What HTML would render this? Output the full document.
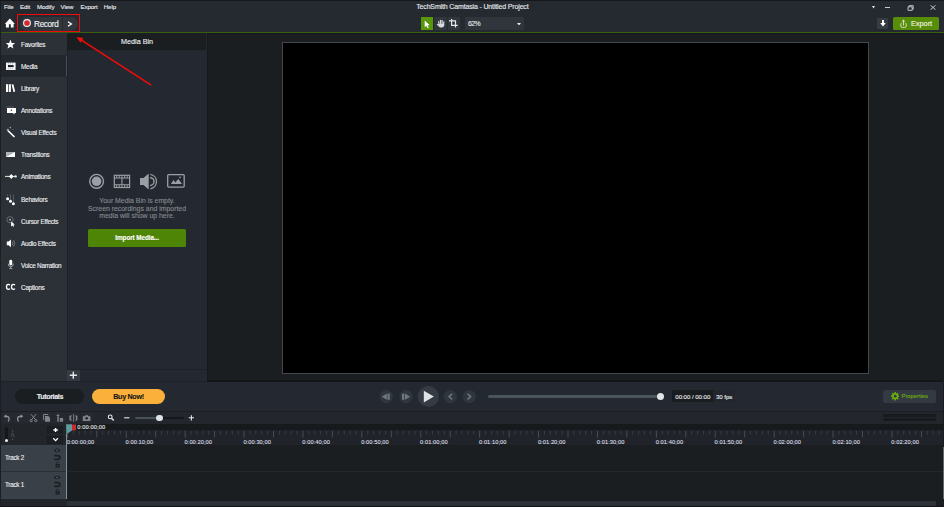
<!DOCTYPE html>
<html><head><meta charset="utf-8">
<style>
*{margin:0;padding:0;box-sizing:border-box}
html,body{width:944px;height:507px;overflow:hidden;background:#1b1e21;font-family:"Liberation Sans",sans-serif;color:#e6e8ea}
.a{position:absolute}
.t{position:absolute;white-space:nowrap;line-height:1;-webkit-text-stroke:0.12px currentColor}
</style></head><body>
<div class="a" style="left:0px;top:0px;width:944px;height:32px;background:#252930;"></div>
<div class="a" style="left:0px;top:0px;width:944px;height:1px;background:#15171a;"></div>
<div class="a" style="left:0px;top:32px;width:944px;height:1.2px;background:#395e13;"></div>
<div class="t" style="left:4px;top:3.78px;font-size:6.1px;color:#eceef1;font-weight:400;letter-spacing:-0.1px">File</div>
<div class="t" style="left:20px;top:3.78px;font-size:6.1px;color:#eceef1;font-weight:400;letter-spacing:-0.1px">Edit</div>
<div class="t" style="left:37px;top:3.78px;font-size:6.1px;color:#eceef1;font-weight:400;letter-spacing:-0.1px">Modify</div>
<div class="t" style="left:60.6px;top:3.78px;font-size:6.1px;color:#eceef1;font-weight:400;letter-spacing:-0.1px">View</div>
<div class="t" style="left:80.5px;top:3.78px;font-size:6.1px;color:#eceef1;font-weight:400;letter-spacing:-0.1px">Export</div>
<div class="t" style="left:103.8px;top:3.78px;font-size:6.1px;color:#eceef1;font-weight:400;letter-spacing:-0.1px">Help</div>
<div class="t" style="left:416.2px;top:3.08px;font-size:7px;color:#e8ebee;font-weight:400;letter-spacing:-0.15px">TechSmith Camtasia - Untitled Project</div>
<svg class="a" style="left:4px;top:18px" width="12" height="11" viewBox="0 0 12 11"><path d="M5.87 0.5 L10.9 6 L9.6 6 L9.6 9.6 L6.8 9.6 L6.8 6.2 L4.9 6.2 L4.9 9.6 L1.9 9.6 L1.9 6 L0.85 6 Z" fill="#fff"/></svg>
<div class="a" style="left:19.5px;top:16.5px;width:58px;height:14px;background:#30363c;border-radius:7px"></div>
<div class="a" style="left:62px;top:16.5px;width:1px;height:14px;background:#262b30;"></div>
<svg class="a" style="left:21.7px;top:18.4px" width="10" height="10" viewBox="0 0 10 10"><circle cx="5" cy="5" r="3.95" fill="#f4f4f4"/><circle cx="5" cy="5" r="2.85" fill="#d62a31"/></svg>
<div class="t" style="left:34.1px;top:20.54px;font-size:8.2px;color:#f2f4f6;font-weight:400;letter-spacing:-0.35px">Record</div>
<svg class="a" style="left:67.3px;top:21px" width="6" height="6" viewBox="0 0 6 6"><path d="M1 0.8 L4.4 3 L1 5.2" stroke="#fff" stroke-width="1.3" fill="none"/></svg>
<div class="a" style="left:16.6px;top:13.7px;width:63.2px;height:18.8px;border:1.8px solid #f50a0a"></div>
<div class="a" style="left:420.8px;top:17px;width:12.7px;height:12.8px;background:#58960a;"></div>
<svg class="a" style="left:424px;top:19.5px" width="7" height="9" viewBox="0 0 7 9"><path d="M0.7 0.4 L0.7 7.3 L2.4 5.7 L3.7 8.3 L4.8 7.8 L3.6 5.2 L5.8 5.2 Z" fill="#fff"/></svg>
<div class="a" style="left:434.2px;top:17px;width:12.6px;height:12.8px;background:#30363c;"></div>
<svg class="a" style="left:435.5px;top:19px" width="10" height="10" viewBox="0 0 10 10"><g fill="#d8dade"><rect x="2.3" y="1.9" width="1.2" height="4.5" rx="0.6" transform="rotate(-12 2.9 4)"/><rect x="3.9" y="0.7" width="1.2" height="5" rx="0.6"/><rect x="5.5" y="1" width="1.2" height="5" rx="0.6"/><rect x="7" y="2.2" width="1.2" height="4.4" rx="0.6" transform="rotate(10 7.6 4.4)"/><path d="M2.4 5 H8.3 V6.2 Q8.2 8.6 5.6 8.6 Q3.8 8.6 2.8 7.4 L0.6 5.3 Q0.9 4.6 1.7 5 L2.4 5.6 Z"/></g></svg>
<div class="a" style="left:447.5px;top:17px;width:12.6px;height:12.8px;background:#30363c;"></div>
<svg class="a" style="left:449px;top:19.3px" width="10" height="10" viewBox="0 0 10 10"><path d="M2.6 0 V6.3 H8.7 M0 1.9 H6.5 V8.6" stroke="#e4e6e9" stroke-width="1.2" fill="none"/></svg>
<div class="a" style="left:465px;top:17px;width:59px;height:13px;background:#2f353b;border-radius:1px"></div>
<div class="t" style="left:467.9px;top:21.29px;font-size:6.9px;color:#e4e7ea;font-weight:400;letter-spacing:-0.55px">62%</div>
<svg class="a" style="left:517px;top:22.5px" width="4" height="2.5" viewBox="0 0 4 2.5"><path d="M0 0 L4 0 L2 2.5 Z" fill="#e6e8eb"/></svg>
<svg class="a" style="left:871.5px;top:6.2px" width="3" height="2.5" viewBox="0 0 3 2.5"><path d="M0 0 L3 0 L1.5 2.4 Z" fill="#e8eaed"/></svg>
<div class="a" style="left:885px;top:6.5px;width:5.3px;height:1px;background:#c8ccd0;"></div>
<svg class="a" style="left:906.5px;top:4.5px" width="7" height="6" viewBox="0 0 7 6"><path d="M1 1.8 L5.2 1.8 L5.2 5.3 L1 5.3 Z M2 1.8 L2 0.7 L6.2 0.7 L6.2 4.2 L5.2 4.2" stroke="#cfd3d7" stroke-width="0.9" fill="none"/></svg>
<svg class="a" style="left:929.6px;top:4.8px" width="6" height="5" viewBox="0 0 6 5"><path d="M0.4 0.2 L5.6 4.8 M5.6 0.2 L0.4 4.8" stroke="#d6d9dd" stroke-width="0.9"/></svg>
<div class="a" style="left:877px;top:17.6px;width:11.3px;height:11.6px;background:#363c43;border-radius:1px"></div>
<svg class="a" style="left:879.5px;top:20px" width="6" height="7" viewBox="0 0 6 7"><path d="M2 0 L4 0 L4 3 L5.8 3 L3 6.5 L0.2 3 L2 3 Z" fill="#fff"/></svg>
<div class="a" style="left:893px;top:17px;width:46.3px;height:13px;background:#578d08;border-radius:1.5px"></div>
<svg class="a" style="left:899.5px;top:18.5px" width="8" height="10" viewBox="0 0 8 10"><path d="M1.8 4.3 H1.3 Q0.8 4.3 0.8 5 V7 Q0.8 8.4 2.3 8.4 H4.7 Q6.2 8.4 6.2 7 V5 Q6.2 4.3 5.7 4.3 H5.2" stroke="#dce8c6" stroke-width="0.9" fill="none"/><path d="M3.5 6.6 V1.6" stroke="#dce8c6" stroke-width="0.9"/><path d="M3.5 0.5 L5.2 2.4 H1.8 Z" fill="#dce8c6"/></svg>
<div class="t" style="left:911px;top:20.04px;font-size:7.3px;color:#f4f8ec;font-weight:400;">Export</div>
<div class="a" style="left:0px;top:33px;width:67px;height:348px;background:#2c3138;"></div>
<div class="a" style="left:0px;top:1px;width:1.1px;height:506px;background:#1b1e22;"></div>
<div class="a" style="left:1px;top:55.4px;width:65px;height:21.5px;background:#22262d;"></div>
<div class="t" style="left:21px;top:41.75px;font-size:6.4px;color:#eef0f2;font-weight:400;letter-spacing:-0.22px">Favorites</div>
<div class="t" style="left:21px;top:63.87px;font-size:6.4px;color:#eef0f2;font-weight:400;letter-spacing:-0.22px">Media</div>
<div class="t" style="left:21px;top:85.99px;font-size:6.4px;color:#eef0f2;font-weight:400;letter-spacing:-0.22px">Library</div>
<div class="t" style="left:21px;top:108.11px;font-size:6.4px;color:#eef0f2;font-weight:400;letter-spacing:-0.22px">Annotations</div>
<div class="t" style="left:21px;top:130.23px;font-size:6.4px;color:#eef0f2;font-weight:400;letter-spacing:-0.22px">Visual Effects</div>
<div class="t" style="left:21px;top:152.35px;font-size:6.4px;color:#eef0f2;font-weight:400;letter-spacing:-0.22px">Transitions</div>
<div class="t" style="left:21px;top:174.47px;font-size:6.4px;color:#eef0f2;font-weight:400;letter-spacing:-0.22px">Animations</div>
<div class="t" style="left:21px;top:196.59px;font-size:6.4px;color:#eef0f2;font-weight:400;letter-spacing:-0.22px">Behaviors</div>
<div class="t" style="left:21px;top:218.71px;font-size:6.4px;color:#eef0f2;font-weight:400;letter-spacing:-0.22px">Cursor Effects</div>
<div class="t" style="left:21px;top:240.83px;font-size:6.4px;color:#eef0f2;font-weight:400;letter-spacing:-0.22px">Audio Effects</div>
<div class="t" style="left:21px;top:262.95px;font-size:6.4px;color:#eef0f2;font-weight:400;letter-spacing:-0.22px">Voice Narration</div>
<div class="t" style="left:21px;top:285.07px;font-size:6.4px;color:#eef0f2;font-weight:400;letter-spacing:-0.22px">Captions</div>
<svg class="a" style="left:0;top:0" width="67" height="300" viewBox="0 0 67 300">
<path d="M10.45 39.6 L11.75 43 L15.1 43.1 L12.5 45.3 L13.4 48.6 L10.45 46.7 L7.5 48.6 L8.4 45.3 L5.8 43.1 L9.15 43 Z" fill="#fff"/>
<rect x="6" y="62.6" width="9.6" height="7.4" fill="#f4f5f6"/><rect x="8" y="65.1" width="5.6" height="2" fill="#15181b"/>
<g fill="#9da2a7"><rect x="7.9" y="63.4" width="1" height="0.9"/><rect x="9.9" y="63.4" width="1" height="0.9"/><rect x="11.9" y="63.4" width="1" height="0.9"/><rect x="7.9" y="68.3" width="1" height="0.9"/><rect x="9.9" y="68.3" width="1" height="0.9"/><rect x="11.9" y="68.3" width="1" height="0.9"/></g>
<g fill="#fff"><rect x="6" y="84.2" width="2.1" height="7.8"/><rect x="8.8" y="84.2" width="2.1" height="7.8"/><path d="M11.6 84.6 L13.4 84.2 L15.2 91.6 L13.4 92 Z"/></g>
<path d="M6 107 H14" stroke="#6f757b" stroke-width="0.6"/>
<path d="M7 107.9 H16 V112.9 H14.3 L14.8 114.4 L12.4 112.9 H7 Z" fill="#fff"/><circle cx="11.4" cy="110.3" r="0.8" fill="#40454b"/>
<path d="M8.3 131 L14 136.5" stroke="#fff" stroke-width="1.7" stroke-linecap="round"/><circle cx="7.8" cy="129.8" r="1.1" fill="#9ea3a8"/><circle cx="10.3" cy="127.6" r="0.8" fill="#9ea3a8"/><path d="M12.3 129.5 H13.8" stroke="#7d8287" stroke-width="0.6"/>
<rect x="6.2" y="152" width="8.8" height="5" fill="#fff"/><path d="M6.2 152 H15 L6.2 157 Z" fill="#aab0b5"/>
<path d="M5 176.4 H16" stroke="#fff" stroke-width="0.9"/><path d="M11.3 173.9 L13.6 176.4 L11.3 178.9 L9 176.4 Z" fill="#fff"/><circle cx="15.6" cy="176.4" r="1.2" fill="#e8e9ea"/>
<path d="M10.5 194.5 V200 M13.4 194.5 V202.6" stroke="#5f656b" stroke-width="0.8"/><circle cx="7.6" cy="195.2" r="0.6" fill="#6a7076"/>
<circle cx="7.6" cy="198.7" r="1.5" fill="#fff"/><circle cx="10.5" cy="201.2" r="1.5" fill="#fff"/><circle cx="13.4" cy="203.7" r="1.5" fill="#fff"/>
<circle cx="10.1" cy="219.7" r="3.1" stroke="#737980" stroke-width="0.8" fill="none"/><rect x="9.3" y="218.9" width="1.6" height="1.6" fill="#b9bdc1"/>
<path d="M11.1 221.6 L11.1 226.4 L12.3 225.4 L13.3 226.8 L14.2 226.2 L13.3 224.8 L14.8 224.6 Z" fill="#fff"/>
<path d="M6.8 241.4 H8.6 L11 239.5 V247.2 L8.6 245.3 H6.8 Z" fill="#fff"/><path d="M12.2 241.6 Q13.3 243.35 12.2 245.1 M13.6 240.2 Q15.8 243.35 13.6 246.5" stroke="#8f959b" stroke-width="0.7" fill="none"/>
<rect x="9.3" y="259.8" width="2.9" height="5.6" rx="1.45" fill="#fff"/><path d="M8.2 263.7 Q8.2 266.8 10.75 266.8 Q13.3 266.8 13.3 263.7 M10.75 266.8 V268.3 M9.2 268.6 H12.3" stroke="#a7acb1" stroke-width="0.9" fill="none"/>
<path d="M9.9 285.1 Q9.4 284.3 8.3 284.3 Q6.5 284.3 6.5 286.85 Q6.5 289.4 8.3 289.4 Q9.4 289.4 9.9 288.6 M14.9 285.1 Q14.4 284.3 13.3 284.3 Q11.5 284.3 11.5 286.85 Q11.5 289.4 13.3 289.4 Q14.4 289.4 14.9 288.6" stroke="#fff" stroke-width="1.3" fill="none"/>
</svg>
<div class="a" style="left:67px;top:33px;width:140px;height:348px;background:#242830;"></div>
<div class="a" style="left:66.8px;top:33px;width:1.3px;height:348px;background:#1e2127;"></div>
<div class="a" style="left:65.9px;top:55.8px;width:1px;height:20.6px;background:#4b5055;"></div>
<div class="a" style="left:67px;top:33px;width:139px;height:16.6px;background:#1b1e21;"></div>
<div class="t" style="left:121.1px;top:37.85px;font-size:7.2px;color:#eef0f3;font-weight:400;">Media Bin</div>
<svg class="a" style="left:88px;top:172.5px" width="100" height="17" viewBox="0 0 100 17">
<circle cx="8.6" cy="8.3" r="6.9" stroke="#9a9fa5" stroke-width="1.4" fill="none"/><circle cx="8.6" cy="8.3" r="4.8" fill="#9a9fa5"/>
<g transform="translate(25.7,1.7)"><rect x="0.6" y="0.6" width="15.3" height="12.2" stroke="#9a9fa5" stroke-width="1.2" fill="none"/><path d="M0.6 3.3 H15.9 M0.6 10.1 H15.9 M8.25 3.3 V10.1" stroke="#9a9fa5" stroke-width="1.1"/><path d="M3 0.6 V3.3 M5.6 0.6 V3.3 M8.25 0.6 V3.3 M10.9 0.6 V3.3 M13.5 0.6 V3.3 M3 10.1 V12.8 M5.6 10.1 V12.8 M8.25 10.1 V12.8 M10.9 10.1 V12.8 M13.5 10.1 V12.8" stroke="#9a9fa5" stroke-width="0.9"/></g>
<g transform="translate(51.5,0.5)"><path d="M0.5 4.4 H4 L9.2 0.1 V16 L4 11.6 H0.5 Z" fill="#9a9fa5"/><path d="M10.6 4.2 A3.9 3.9 0 0 1 10.6 12" stroke="#9a9fa5" stroke-width="1.4" fill="none"/><path d="M10.9 0.9 A7.3 7.3 0 0 1 10.9 15.3" stroke="#9a9fa5" stroke-width="1.3" fill="none"/></g>
<g transform="translate(79,1.1)"><rect x="0.7" y="0.5" width="16.5" height="12.5" rx="1" stroke="#9a9fa5" stroke-width="1.3" fill="none"/><path d="M3.9 9.8 L6.5 5.8 L8.3 8.3 L11.3 4.9 L15 9.8 Z" fill="#9a9fa5"/><circle cx="13" cy="3.3" r="0.8" fill="#9a9fa5"/></g>
</svg>
<div class="t" style="left:67px;width:140px;text-align:center;top:198.39px;font-size:6.9px;color:#858a90">Your Media Bin is empty.</div>
<div class="t" style="left:67px;width:140px;text-align:center;top:205.59px;font-size:6.9px;color:#858a90">Screen recordings and imported</div>
<div class="t" style="left:67px;width:140px;text-align:center;top:212.79px;font-size:6.9px;color:#858a90">media will show up here.</div>
<div class="a" style="left:88.4px;top:228.9px;width:97.6px;height:17.7px;background:#4e8507;border-radius:1.5px"></div>
<div class="t" style="left:88.3px;width:97.7px;text-align:center;top:235.05px;font-size:6.4px;color:#fff;font-weight:700;letter-spacing:-0.1px">Import Media...</div>
<div class="a" style="left:67px;top:368.5px;width:139px;height:1.1px;background:#1e2226;"></div>
<div class="a" style="left:67.4px;top:369.7px;width:12.6px;height:11.3px;background:#343b42;"></div>
<svg class="a" style="left:69px;top:371px" width="9" height="9" viewBox="0 0 9 9"><path d="M4.3 0.8 V7.7 M0.8 4.25 H7.9" stroke="#e8eaed" stroke-width="1.4"/></svg>
<div class="a" style="left:207px;top:33px;width:737px;height:348px;background:#1b1e21;"></div>
<div class="a" style="left:207px;top:33px;width:1.2px;height:348px;background:#15181a;"></div>
<div class="a" style="left:207px;top:33px;width:737px;height:1px;background:#16191b;"></div>
<div class="a" style="left:282.3px;top:42px;width:587px;height:331.5px;background:#000;border:1.6px solid #454647;box-sizing:border-box"></div>
<div class="a" style="left:1px;top:381.5px;width:942px;height:30px;background:#242830;"></div>
<div class="a" style="left:207px;top:380.3px;width:737px;height:1.5px;background:#131517;"></div>
<div class="a" style="left:0px;top:380.9px;width:207px;height:1.1px;background:#1e2125;"></div>
<div class="a" style="left:15.3px;top:389px;width:69.2px;height:15px;background:#1b1e21;border-radius:7.5px"></div>
<div class="t" style="left:15.3px;top:392.65px;font-size:7.2px;color:#eceef0;font-weight:700;width:69.2px;text-align:center;letter-spacing:-0.38px">Tutorials</div>
<div class="a" style="left:92px;top:389px;width:73px;height:15px;background:#fbb03b;border-radius:7.5px"></div>
<div class="t" style="left:92px;top:392.65px;font-size:7.2px;color:#161616;font-weight:700;width:73px;text-align:center;letter-spacing:-0.32px">Buy Now!</div>
<svg class="a" style="left:370px;top:382px" width="110" height="28" viewBox="0 0 110 28">
<circle cx="16.3" cy="14.6" r="6.6" fill="#30363d"/><path d="M11.7 14.7 L16.9 11.6 V17.8 Z" fill="#6f767d"/><rect x="17.5" y="11.6" width="2.3" height="6.2" fill="#6f767d"/>
<circle cx="36.1" cy="14.6" r="6.6" fill="#30363d"/><rect x="32" y="11.6" width="2.3" height="6.2" fill="#6f767d"/><path d="M40.2 14.7 L35 11.6 V17.8 Z" fill="#6f767d"/>
<circle cx="58.3" cy="14.6" r="10.5" fill="#353b42"/><path d="M53.8 8.7 L63.9 14.6 L53.8 20.5 Z" fill="#dfe3e8"/>
<circle cx="80.4" cy="14.6" r="6.6" fill="#30363d"/><path d="M82.2 11.8 L79 14.6 L82.2 17.4" stroke="#6f767d" stroke-width="1.5" fill="none"/>
<circle cx="99.3" cy="14.6" r="6.6" fill="#30363d"/><path d="M97.5 11.8 L100.7 14.6 L97.5 17.4" stroke="#6f767d" stroke-width="1.5" fill="none"/>
</svg>
<div class="a" style="left:487.5px;top:395px;width:173px;height:3px;background:#4a555b;border-radius:1.5px"></div>
<div class="a" style="left:656.7px;top:393.2px;width:7.2px;height:7.2px;border-radius:50%;background:#e1e4e8"></div>
<div class="a" style="left:672px;top:390.1px;width:41px;height:12.2px;background:#1a1d20;"></div>
<div class="a" style="left:713px;top:390.1px;width:21.5px;height:12.2px;background:#22262c;"></div>
<div class="t" style="left:675.3px;top:393.78px;font-size:6.1px;color:#e6e9ec;font-weight:400;letter-spacing:-0.05px">00:00 / 00:00</div>
<div class="t" style="left:716px;top:393.78px;font-size:6.1px;color:#e6e9ec;font-weight:400;letter-spacing:-0.05px">30 fps</div>
<div class="a" style="left:883px;top:389.6px;width:53px;height:13.4px;background:#343a41;border-radius:2px"></div>
<svg class="a" style="left:890.8px;top:392.3px" width="8.4" height="8.4" viewBox="0 0 8.4 8.4"><g fill="#6cb00e"><circle cx="4.2" cy="4.2" r="3"/><rect x="3.45" y="0" width="1.5" height="8.4"/><rect x="0" y="3.45" width="8.4" height="1.5"/><rect x="3.45" y="0" width="1.5" height="8.4" transform="rotate(45 4.2 4.2)"/><rect x="3.45" y="0" width="1.5" height="8.4" transform="rotate(-45 4.2 4.2)"/></g><circle cx="4.2" cy="4.2" r="1.4" fill="#353b42"/></svg>
<div class="t" style="left:901.5px;top:393.71px;font-size:5.9px;color:#6ea912;font-weight:400;letter-spacing:-0.05px">Properties</div>
<div class="a" style="left:1px;top:410.7px;width:942px;height:1.2px;background:#1a1d21;"></div>
<div class="a" style="left:1px;top:412px;width:942px;height:12.5px;background:#23272d;"></div>
<div class="a" style="left:883px;top:414.1px;width:53px;height:2.7px;background:#181b1e;border-radius:1.2px"></div>
<div class="a" style="left:883px;top:418.2px;width:53px;height:2.7px;background:#181b1e;border-radius:1.2px"></div>
<div class="a" style="left:2.1px;top:412.4px;width:10.9px;height:11.1px;background:#262a30;"></div>
<div class="a" style="left:14px;top:412.4px;width:12px;height:11.1px;background:#262a30;"></div>
<div class="a" style="left:27px;top:412.4px;width:12.200000000000003px;height:11.1px;background:#262a30;"></div>
<div class="a" style="left:41px;top:412.4px;width:11.799999999999997px;height:11.1px;background:#262a30;"></div>
<div class="a" style="left:54px;top:412.4px;width:12px;height:11.1px;background:#262a30;"></div>
<div class="a" style="left:66.8px;top:412.4px;width:12.200000000000003px;height:11.1px;background:#262a30;"></div>
<div class="a" style="left:80.8px;top:412.4px;width:11.100000000000009px;height:11.1px;background:#262a30;"></div>
<svg class="a" style="left:0px;top:0px" width="200" height="430" viewBox="0 0 200 430">
<g stroke="#8d9298" fill="none" stroke-width="1.3" stroke-linecap="round">
<path d="M5 416.3 H6.8 Q9 416.3 9 418.6 Q9 420.9 8.3 421"/>
<path d="M21.8 416.3 H20 Q17.6 416.3 17.6 418.6 Q17.6 420.5 18.3 421"/>
</g>
<g fill="#8d9298"><path d="M3.8 416.3 L6.4 414.3 V418.3 Z"/><path d="M23.2 416.3 L20.6 414.3 V418.3 Z"/></g>
<g stroke="#888d93" fill="none" stroke-width="0.9">
<path d="M31 414.2 L35.3 419.5 M36 414.2 L31.7 419.5"/><circle cx="31.2" cy="420.6" r="1.1"/><circle cx="35.8" cy="420.6" r="1.1"/>
<path d="M43.6 420 V414.5 H48.3"/>
</g>
<g fill="#7f858b">
<path d="M45 416 H48.3 L50 417.7 V421.7 H45 Z"/>
<path d="M57.3 416.3 V421.7 H58.8 V416.3 Z"/><path d="M58 414 L59.8 416 H56.2 Z"/>
<rect x="59.8" y="418" width="3.3" height="3.7"/>
<rect x="73" y="414" width="0.8" height="8"/>
<path d="M70 415.5 H71.9 V420.5 H70 L69.4 419.8 V416.2 Z M74.9 415.5 H76.8 L77.4 416.2 V419.8 L76.8 420.5 H74.9 Z"/>
<path d="M82.8 416.3 H84.6 L85.5 415.2 H87.8 L88.7 416.3 H90.4 V421 H82.8 Z"/>
</g>
<rect x="70.9" y="416.3" width="0.9" height="3.4" fill="#262a30"/><rect x="75" y="416.3" width="0.9" height="3.4" fill="#262a30"/>
<circle cx="86.6" cy="418.3" r="1.2" fill="#1b1e21"/>
<circle cx="110.2" cy="416.9" r="1.9" stroke="#e6e8eb" stroke-width="1.1" fill="none"/><path d="M111.7 418.4 L113.8 420.4" stroke="#e6e8eb" stroke-width="1.4"/>
<path d="M124.2 417.8 H129.4" stroke="#e6e8eb" stroke-width="1.1"/>
<path d="M188.8 417.8 H194 M191.4 415.2 V420.4" stroke="#e6e8eb" stroke-width="1.1"/>
</svg>
<div class="a" style="left:135px;top:417px;width:48.7px;height:2px;background:#15181a;border-radius:1px"></div>
<div class="a" style="left:135px;top:417px;width:24px;height:2px;background:#47525a;border-radius:1px"></div>
<div class="a" style="left:155.9px;top:414.5px;width:6.8px;height:6.8px;border-radius:50%;background:#dfe2e6"></div>
<div class="a" style="left:1px;top:424.2px;width:65.5px;height:20.8px;background:#22262b;"></div>
<div class="a" style="left:4.9px;top:427.2px;width:2.9px;height:14px;background:#15181b;border-radius:1.4px"></div>
<div class="a" style="left:4.5px;top:438.5px;width:3.6px;height:3.6px;border-radius:50%;background:#eef0f2"></div>
<svg class="a" style="left:10px;top:429px" width="6" height="12" viewBox="0 0 6 12"><g fill="#4e555b"><circle cx="2.6" cy="1.9" r="0.8"/><circle cx="2.6" cy="10.2" r="0.8"/></g><circle cx="2.5" cy="5.7" r="1.3" stroke="#4e555b" stroke-width="0.8" fill="none"/><path d="M3.4 6.6 L4.6 7.8" stroke="#4e555b" stroke-width="0.9"/></svg>
<div class="a" style="left:46.7px;top:426px;width:16.7px;height:7.1px;background:#1c1f23;border-radius:1px;box-shadow:inset 0 0 0 0.6px #191c1f"></div>
<div class="a" style="left:46.7px;top:435.7px;width:16.7px;height:8.2px;background:#1c1f23;border-radius:1px;box-shadow:inset 0 0 0 0.6px #191c1f"></div>
<svg class="a" style="left:52px;top:426px" width="8" height="17" viewBox="0 0 8 17"><path d="M3.6 2 V6 M1.4 4 H5.8" stroke="#fff" stroke-width="1.4"/><path d="M1.3 12.2 L3.6 14.6 L5.9 12.2" stroke="#fff" stroke-width="1.3" fill="none"/></svg>
<div class="a" style="left:66.5px;top:424.2px;width:877px;height:6.1px;background:#171a1c;"></div>
<div class="a" style="left:66.5px;top:430.3px;width:877px;height:14.5px;background:#20242a;"></div>
<svg class="a" style="left:0;top:0" width="944" height="507"><rect x="66.90" y="430.8" width="0.9" height="7" fill="#4b5157"/><rect x="72.79" y="430.8" width="0.9" height="3.8" fill="#3a3f45"/><rect x="78.68" y="430.8" width="0.9" height="3.8" fill="#3a3f45"/><rect x="84.57" y="430.8" width="0.9" height="3.8" fill="#3a3f45"/><rect x="90.46" y="430.8" width="0.9" height="3.8" fill="#3a3f45"/><rect x="96.35" y="430.8" width="0.9" height="6.5" fill="#4b5157"/><rect x="102.24" y="430.8" width="0.9" height="3.8" fill="#3a3f45"/><rect x="108.13" y="430.8" width="0.9" height="3.8" fill="#3a3f45"/><rect x="114.02" y="430.8" width="0.9" height="3.8" fill="#3a3f45"/><rect x="119.91" y="430.8" width="0.9" height="3.8" fill="#3a3f45"/><rect x="125.80" y="430.8" width="0.9" height="7" fill="#4b5157"/><rect x="131.69" y="430.8" width="0.9" height="3.8" fill="#3a3f45"/><rect x="137.58" y="430.8" width="0.9" height="3.8" fill="#3a3f45"/><rect x="143.47" y="430.8" width="0.9" height="3.8" fill="#3a3f45"/><rect x="149.36" y="430.8" width="0.9" height="3.8" fill="#3a3f45"/><rect x="155.25" y="430.8" width="0.9" height="6.5" fill="#4b5157"/><rect x="161.14" y="430.8" width="0.9" height="3.8" fill="#3a3f45"/><rect x="167.03" y="430.8" width="0.9" height="3.8" fill="#3a3f45"/><rect x="172.92" y="430.8" width="0.9" height="3.8" fill="#3a3f45"/><rect x="178.81" y="430.8" width="0.9" height="3.8" fill="#3a3f45"/><rect x="184.70" y="430.8" width="0.9" height="7" fill="#4b5157"/><rect x="190.59" y="430.8" width="0.9" height="3.8" fill="#3a3f45"/><rect x="196.48" y="430.8" width="0.9" height="3.8" fill="#3a3f45"/><rect x="202.37" y="430.8" width="0.9" height="3.8" fill="#3a3f45"/><rect x="208.26" y="430.8" width="0.9" height="3.8" fill="#3a3f45"/><rect x="214.15" y="430.8" width="0.9" height="6.5" fill="#4b5157"/><rect x="220.04" y="430.8" width="0.9" height="3.8" fill="#3a3f45"/><rect x="225.93" y="430.8" width="0.9" height="3.8" fill="#3a3f45"/><rect x="231.82" y="430.8" width="0.9" height="3.8" fill="#3a3f45"/><rect x="237.71" y="430.8" width="0.9" height="3.8" fill="#3a3f45"/><rect x="243.60" y="430.8" width="0.9" height="7" fill="#4b5157"/><rect x="249.49" y="430.8" width="0.9" height="3.8" fill="#3a3f45"/><rect x="255.38" y="430.8" width="0.9" height="3.8" fill="#3a3f45"/><rect x="261.27" y="430.8" width="0.9" height="3.8" fill="#3a3f45"/><rect x="267.16" y="430.8" width="0.9" height="3.8" fill="#3a3f45"/><rect x="273.05" y="430.8" width="0.9" height="6.5" fill="#4b5157"/><rect x="278.94" y="430.8" width="0.9" height="3.8" fill="#3a3f45"/><rect x="284.83" y="430.8" width="0.9" height="3.8" fill="#3a3f45"/><rect x="290.72" y="430.8" width="0.9" height="3.8" fill="#3a3f45"/><rect x="296.61" y="430.8" width="0.9" height="3.8" fill="#3a3f45"/><rect x="302.50" y="430.8" width="0.9" height="7" fill="#4b5157"/><rect x="308.39" y="430.8" width="0.9" height="3.8" fill="#3a3f45"/><rect x="314.28" y="430.8" width="0.9" height="3.8" fill="#3a3f45"/><rect x="320.17" y="430.8" width="0.9" height="3.8" fill="#3a3f45"/><rect x="326.06" y="430.8" width="0.9" height="3.8" fill="#3a3f45"/><rect x="331.95" y="430.8" width="0.9" height="6.5" fill="#4b5157"/><rect x="337.84" y="430.8" width="0.9" height="3.8" fill="#3a3f45"/><rect x="343.73" y="430.8" width="0.9" height="3.8" fill="#3a3f45"/><rect x="349.62" y="430.8" width="0.9" height="3.8" fill="#3a3f45"/><rect x="355.51" y="430.8" width="0.9" height="3.8" fill="#3a3f45"/><rect x="361.40" y="430.8" width="0.9" height="7" fill="#4b5157"/><rect x="367.29" y="430.8" width="0.9" height="3.8" fill="#3a3f45"/><rect x="373.18" y="430.8" width="0.9" height="3.8" fill="#3a3f45"/><rect x="379.07" y="430.8" width="0.9" height="3.8" fill="#3a3f45"/><rect x="384.96" y="430.8" width="0.9" height="3.8" fill="#3a3f45"/><rect x="390.85" y="430.8" width="0.9" height="6.5" fill="#4b5157"/><rect x="396.74" y="430.8" width="0.9" height="3.8" fill="#3a3f45"/><rect x="402.63" y="430.8" width="0.9" height="3.8" fill="#3a3f45"/><rect x="408.52" y="430.8" width="0.9" height="3.8" fill="#3a3f45"/><rect x="414.41" y="430.8" width="0.9" height="3.8" fill="#3a3f45"/><rect x="420.30" y="430.8" width="0.9" height="7" fill="#4b5157"/><rect x="426.19" y="430.8" width="0.9" height="3.8" fill="#3a3f45"/><rect x="432.08" y="430.8" width="0.9" height="3.8" fill="#3a3f45"/><rect x="437.97" y="430.8" width="0.9" height="3.8" fill="#3a3f45"/><rect x="443.86" y="430.8" width="0.9" height="3.8" fill="#3a3f45"/><rect x="449.75" y="430.8" width="0.9" height="6.5" fill="#4b5157"/><rect x="455.64" y="430.8" width="0.9" height="3.8" fill="#3a3f45"/><rect x="461.53" y="430.8" width="0.9" height="3.8" fill="#3a3f45"/><rect x="467.42" y="430.8" width="0.9" height="3.8" fill="#3a3f45"/><rect x="473.31" y="430.8" width="0.9" height="3.8" fill="#3a3f45"/><rect x="479.20" y="430.8" width="0.9" height="7" fill="#4b5157"/><rect x="485.09" y="430.8" width="0.9" height="3.8" fill="#3a3f45"/><rect x="490.98" y="430.8" width="0.9" height="3.8" fill="#3a3f45"/><rect x="496.87" y="430.8" width="0.9" height="3.8" fill="#3a3f45"/><rect x="502.76" y="430.8" width="0.9" height="3.8" fill="#3a3f45"/><rect x="508.65" y="430.8" width="0.9" height="6.5" fill="#4b5157"/><rect x="514.54" y="430.8" width="0.9" height="3.8" fill="#3a3f45"/><rect x="520.43" y="430.8" width="0.9" height="3.8" fill="#3a3f45"/><rect x="526.32" y="430.8" width="0.9" height="3.8" fill="#3a3f45"/><rect x="532.21" y="430.8" width="0.9" height="3.8" fill="#3a3f45"/><rect x="538.10" y="430.8" width="0.9" height="7" fill="#4b5157"/><rect x="543.99" y="430.8" width="0.9" height="3.8" fill="#3a3f45"/><rect x="549.88" y="430.8" width="0.9" height="3.8" fill="#3a3f45"/><rect x="555.77" y="430.8" width="0.9" height="3.8" fill="#3a3f45"/><rect x="561.66" y="430.8" width="0.9" height="3.8" fill="#3a3f45"/><rect x="567.55" y="430.8" width="0.9" height="6.5" fill="#4b5157"/><rect x="573.44" y="430.8" width="0.9" height="3.8" fill="#3a3f45"/><rect x="579.33" y="430.8" width="0.9" height="3.8" fill="#3a3f45"/><rect x="585.22" y="430.8" width="0.9" height="3.8" fill="#3a3f45"/><rect x="591.11" y="430.8" width="0.9" height="3.8" fill="#3a3f45"/><rect x="597.00" y="430.8" width="0.9" height="7" fill="#4b5157"/><rect x="602.89" y="430.8" width="0.9" height="3.8" fill="#3a3f45"/><rect x="608.78" y="430.8" width="0.9" height="3.8" fill="#3a3f45"/><rect x="614.67" y="430.8" width="0.9" height="3.8" fill="#3a3f45"/><rect x="620.56" y="430.8" width="0.9" height="3.8" fill="#3a3f45"/><rect x="626.45" y="430.8" width="0.9" height="6.5" fill="#4b5157"/><rect x="632.34" y="430.8" width="0.9" height="3.8" fill="#3a3f45"/><rect x="638.23" y="430.8" width="0.9" height="3.8" fill="#3a3f45"/><rect x="644.12" y="430.8" width="0.9" height="3.8" fill="#3a3f45"/><rect x="650.01" y="430.8" width="0.9" height="3.8" fill="#3a3f45"/><rect x="655.90" y="430.8" width="0.9" height="7" fill="#4b5157"/><rect x="661.79" y="430.8" width="0.9" height="3.8" fill="#3a3f45"/><rect x="667.68" y="430.8" width="0.9" height="3.8" fill="#3a3f45"/><rect x="673.57" y="430.8" width="0.9" height="3.8" fill="#3a3f45"/><rect x="679.46" y="430.8" width="0.9" height="3.8" fill="#3a3f45"/><rect x="685.35" y="430.8" width="0.9" height="6.5" fill="#4b5157"/><rect x="691.24" y="430.8" width="0.9" height="3.8" fill="#3a3f45"/><rect x="697.13" y="430.8" width="0.9" height="3.8" fill="#3a3f45"/><rect x="703.02" y="430.8" width="0.9" height="3.8" fill="#3a3f45"/><rect x="708.91" y="430.8" width="0.9" height="3.8" fill="#3a3f45"/><rect x="714.80" y="430.8" width="0.9" height="7" fill="#4b5157"/><rect x="720.69" y="430.8" width="0.9" height="3.8" fill="#3a3f45"/><rect x="726.58" y="430.8" width="0.9" height="3.8" fill="#3a3f45"/><rect x="732.47" y="430.8" width="0.9" height="3.8" fill="#3a3f45"/><rect x="738.36" y="430.8" width="0.9" height="3.8" fill="#3a3f45"/><rect x="744.25" y="430.8" width="0.9" height="6.5" fill="#4b5157"/><rect x="750.14" y="430.8" width="0.9" height="3.8" fill="#3a3f45"/><rect x="756.03" y="430.8" width="0.9" height="3.8" fill="#3a3f45"/><rect x="761.92" y="430.8" width="0.9" height="3.8" fill="#3a3f45"/><rect x="767.81" y="430.8" width="0.9" height="3.8" fill="#3a3f45"/><rect x="773.70" y="430.8" width="0.9" height="7" fill="#4b5157"/><rect x="779.59" y="430.8" width="0.9" height="3.8" fill="#3a3f45"/><rect x="785.48" y="430.8" width="0.9" height="3.8" fill="#3a3f45"/><rect x="791.37" y="430.8" width="0.9" height="3.8" fill="#3a3f45"/><rect x="797.26" y="430.8" width="0.9" height="3.8" fill="#3a3f45"/><rect x="803.15" y="430.8" width="0.9" height="6.5" fill="#4b5157"/><rect x="809.04" y="430.8" width="0.9" height="3.8" fill="#3a3f45"/><rect x="814.93" y="430.8" width="0.9" height="3.8" fill="#3a3f45"/><rect x="820.82" y="430.8" width="0.9" height="3.8" fill="#3a3f45"/><rect x="826.71" y="430.8" width="0.9" height="3.8" fill="#3a3f45"/><rect x="832.60" y="430.8" width="0.9" height="7" fill="#4b5157"/><rect x="838.49" y="430.8" width="0.9" height="3.8" fill="#3a3f45"/><rect x="844.38" y="430.8" width="0.9" height="3.8" fill="#3a3f45"/><rect x="850.27" y="430.8" width="0.9" height="3.8" fill="#3a3f45"/><rect x="856.16" y="430.8" width="0.9" height="3.8" fill="#3a3f45"/><rect x="862.05" y="430.8" width="0.9" height="6.5" fill="#4b5157"/><rect x="867.94" y="430.8" width="0.9" height="3.8" fill="#3a3f45"/><rect x="873.83" y="430.8" width="0.9" height="3.8" fill="#3a3f45"/><rect x="879.72" y="430.8" width="0.9" height="3.8" fill="#3a3f45"/><rect x="885.61" y="430.8" width="0.9" height="3.8" fill="#3a3f45"/><rect x="891.50" y="430.8" width="0.9" height="7" fill="#4b5157"/><rect x="897.39" y="430.8" width="0.9" height="3.8" fill="#3a3f45"/><rect x="903.28" y="430.8" width="0.9" height="3.8" fill="#3a3f45"/><rect x="909.17" y="430.8" width="0.9" height="3.8" fill="#3a3f45"/><rect x="915.06" y="430.8" width="0.9" height="3.8" fill="#3a3f45"/><rect x="920.95" y="430.8" width="0.9" height="6.5" fill="#4b5157"/><rect x="926.84" y="430.8" width="0.9" height="3.8" fill="#3a3f45"/><rect x="932.73" y="430.8" width="0.9" height="3.8" fill="#3a3f45"/><rect x="938.62" y="430.8" width="0.9" height="3.8" fill="#3a3f45"/></svg>
<div class="t" style="left:66.7px;top:439.93px;font-size:5.7px;color:#dadde2;font-weight:400;letter-spacing:0.07px">0:00:00;00</div>
<div class="t" style="left:125.60000000000001px;top:439.93px;font-size:5.7px;color:#dadde2;font-weight:400;letter-spacing:0.07px">0:00:10;00</div>
<div class="t" style="left:184.5px;top:439.93px;font-size:5.7px;color:#dadde2;font-weight:400;letter-spacing:0.07px">0:00:20;00</div>
<div class="t" style="left:243.39999999999998px;top:439.93px;font-size:5.7px;color:#dadde2;font-weight:400;letter-spacing:0.07px">0:00:30;00</div>
<div class="t" style="left:302.3px;top:439.93px;font-size:5.7px;color:#dadde2;font-weight:400;letter-spacing:0.07px">0:00:40;00</div>
<div class="t" style="left:361.2px;top:439.93px;font-size:5.7px;color:#dadde2;font-weight:400;letter-spacing:0.07px">0:00:50;00</div>
<div class="t" style="left:420.09999999999997px;top:439.93px;font-size:5.7px;color:#dadde2;font-weight:400;letter-spacing:0.07px">0:01:00;00</div>
<div class="t" style="left:479.0px;top:439.93px;font-size:5.7px;color:#dadde2;font-weight:400;letter-spacing:0.07px">0:01:10;00</div>
<div class="t" style="left:537.9000000000001px;top:439.93px;font-size:5.7px;color:#dadde2;font-weight:400;letter-spacing:0.07px">0:01:20;00</div>
<div class="t" style="left:596.8000000000001px;top:439.93px;font-size:5.7px;color:#dadde2;font-weight:400;letter-spacing:0.07px">0:01:30;00</div>
<div class="t" style="left:655.7px;top:439.93px;font-size:5.7px;color:#dadde2;font-weight:400;letter-spacing:0.07px">0:01:40;00</div>
<div class="t" style="left:714.6px;top:439.93px;font-size:5.7px;color:#dadde2;font-weight:400;letter-spacing:0.07px">0:01:50;00</div>
<div class="t" style="left:773.5px;top:439.93px;font-size:5.7px;color:#dadde2;font-weight:400;letter-spacing:0.07px">0:02:00;00</div>
<div class="t" style="left:832.4px;top:439.93px;font-size:5.7px;color:#dadde2;font-weight:400;letter-spacing:0.07px">0:02:10;00</div>
<div class="t" style="left:891.3000000000001px;top:439.93px;font-size:5.7px;color:#dadde2;font-weight:400;letter-spacing:0.07px">0:02:20;00</div>
<svg class="a" style="left:66px;top:424px" width="12" height="14" viewBox="0 0 12 14"><path d="M0.1 0.3 H6 V6.4 L0.3 10.2 Z" fill="#5f9aa0"/><rect x="6" y="0.5" width="4" height="5.9" fill="#cc2a2b"/></svg>
<div class="t" style="left:77.3px;top:424.73px;font-size:5.7px;color:#e6e9ec;font-weight:400;letter-spacing:0.1px">0:00:00;00</div>
<div class="a" style="left:1px;top:445px;width:64.8px;height:26px;background:#394047;"></div>
<div class="a" style="left:1px;top:471px;width:65.5px;height:1px;background:#2b3035;"></div>
<div class="a" style="left:1px;top:472px;width:64.8px;height:26.8px;background:#394047;"></div>
<div class="a" style="left:1px;top:498.8px;width:65.5px;height:8.2px;background:#22262b;"></div>
<div class="a" style="left:67px;top:445px;width:876px;height:26px;background:#1b1e20;"></div>
<div class="a" style="left:67px;top:471px;width:876px;height:1px;background:#24282c;"></div>
<div class="a" style="left:67px;top:472px;width:876px;height:27px;background:#1b1e20;"></div>
<div class="t" style="left:5px;top:454.56px;font-size:6.3px;color:#eceef1;font-weight:400;letter-spacing:-0.25px">Track 2</div>
<div class="t" style="left:5px;top:482.06px;font-size:6.3px;color:#eceef1;font-weight:400;letter-spacing:-0.25px">Track 1</div>
<svg class="a" style="left:0;top:0px" width="70" height="480" viewBox="0 0 70 480"><path d="M53.8 450.4 Q57.15 446.8 60.5 450.4 Q57.15 454 53.8 450.4 Z" fill="#1d2023"/><circle cx="57.15" cy="450.4" r="0.9" fill="#5a6168"/>
<path d="M54.3 455.6 H57.6 Q59.9 455.6 59.9 457.5 Q59.9 459.4 57.6 459.4 H54.3" stroke="#1d2023" stroke-width="1.7" fill="none"/>
<path d="M56.4 464.3 V463.2 Q56.4 462.2 57.6 462.2 Q58.8 462.2 58.8 463.2" stroke="#1d2023" stroke-width="0.8" fill="none"/><rect x="55.6" y="464" width="4.1" height="3.6" fill="#1d2023"/><rect x="57.2" y="465.2" width="0.9" height="1.2" fill="#4a5057"/></svg>
<svg class="a" style="left:0;top:27.3px" width="70" height="480" viewBox="0 0 70 480"><path d="M53.8 450.4 Q57.15 446.8 60.5 450.4 Q57.15 454 53.8 450.4 Z" fill="#1d2023"/><circle cx="57.15" cy="450.4" r="0.9" fill="#5a6168"/>
<path d="M54.3 455.6 H57.6 Q59.9 455.6 59.9 457.5 Q59.9 459.4 57.6 459.4 H54.3" stroke="#1d2023" stroke-width="1.7" fill="none"/>
<path d="M56.4 464.3 V463.2 Q56.4 462.2 57.6 462.2 Q58.8 462.2 58.8 463.2" stroke="#1d2023" stroke-width="0.8" fill="none"/><rect x="55.6" y="464" width="4.1" height="3.6" fill="#1d2023"/><rect x="57.2" y="465.2" width="0.9" height="1.2" fill="#4a5057"/></svg>
<div class="a" style="left:65.8px;top:433.5px;width:1.5px;height:65.5px;background:#7f9499;"></div>
<div class="a" style="left:67px;top:501px;width:869px;height:4.6px;background:#2c3137;"></div>
<div class="a" style="left:0px;top:506px;width:944px;height:1px;background:#111315;"></div>
<div class="a" style="left:942.7px;top:33px;width:1.3px;height:474px;background:#1a1d20;"></div>
<div class="a" style="left:942.7px;top:447px;width:1.3px;height:52px;background:#5f6a70;"></div>
<svg class="a" style="left:0;top:0" width="944" height="507"><path d="M151.2 85.1 L81 39.8" stroke="#f50a0a" stroke-width="1.5"/><path d="M76.5 36.9 L83.5 38.1 L80.4 42.8 Z" fill="#f50a0a"/></svg>
</body></html>
